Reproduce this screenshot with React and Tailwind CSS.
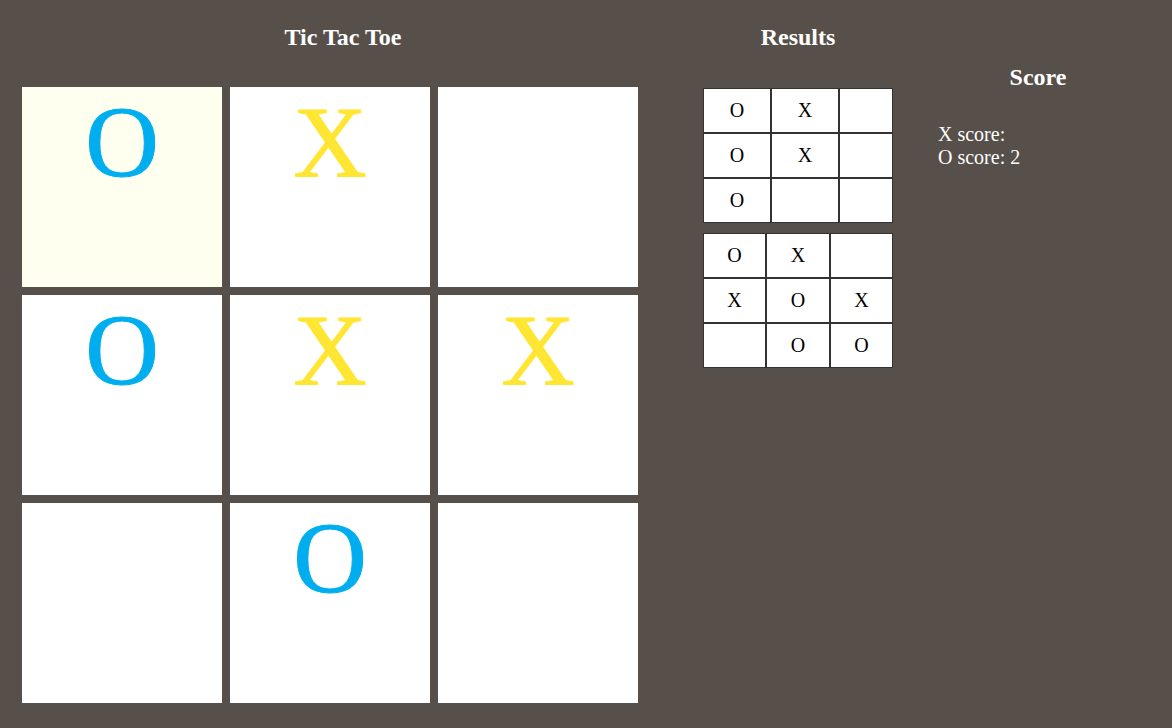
const board = ["O", "X", "", "O", "X", "X", "", "O", ""];

const results = [
  {
    rows: [["O", "X", ""], ["O", "X", ""], ["O", "", ""]],
    columns: ["w-[68px]", "w-[68px]", "w-[54px]"],
  },
  {
    rows: [["O", "X", ""], ["X", "O", "X"], ["", "O", "O"]],
    columns: ["w-[63px]", "w-[64px]", "w-[63px]"],
  },
];

function Heading({ children }) {
  return <h2 className="text-center text-2xl leading-[26px] font-bold">{children}</h2>;
}

function Square({ mark, active, index }) {
  return (
    <button
      type="button"
      aria-label={`Square ${index + 1} ${mark}`}
      className={`flex size-[200px] items-start justify-center text-[102px] leading-[111px] [-webkit-text-stroke:1px_currentColor] ${
        active ? "bg-[#fffff0]" : "bg-white"
      } ${mark === "O" ? "text-[#00aeef]" : "text-[#ffe633]"}`}
    >
      {mark}
    </button>
  );
}

function ResultTable({ rows, columns }) {
  return (
    <table className="w-[190px] table-fixed border-separate border-spacing-0 bg-white text-center text-xl text-black">
      <tbody>
        {rows.map((row, r) => (
          <tr key={r}>
            {row.map((mark, c) => (
              <td key={c} className={`h-[45px] border border-[#333333] p-0 pb-0.5 ${columns[c]}`}>
                {mark}
              </td>
            ))}
          </tr>
        ))}
      </tbody>
    </table>
  );
}

export default function App() {
  return (
    <main className="grid min-h-screen grid-cols-[686fr_224fr_262fr] items-start bg-[#574f4a] font-['Liberation_Serif',serif] text-white">
      <section className="pt-6">
        <Heading>Tic Tac Toe</Heading>
        <div className="mt-[37px] ml-[22px] grid w-max grid-cols-3 gap-2">
          {board.map((mark, i) => (
            <Square key={i} mark={mark} index={i} active={i === 0} />
          ))}
        </div>
      </section>
      <section className="pt-6">
        <Heading>Results</Heading>
        <div className="mt-[38px] flex flex-col items-center gap-2.5">
          {results.map((result, i) => (
            <ResultTable key={i} {...result} />
          ))}
        </div>
      </section>
      <section className="ml-7 w-[200px] pt-16">
        <Heading>Score</Heading>
        <div className="mt-[33px] text-xl leading-[23px]">
          <p>X score:</p>
          <p>O score: 2</p>
        </div>
      </section>
    </main>
  );
}
